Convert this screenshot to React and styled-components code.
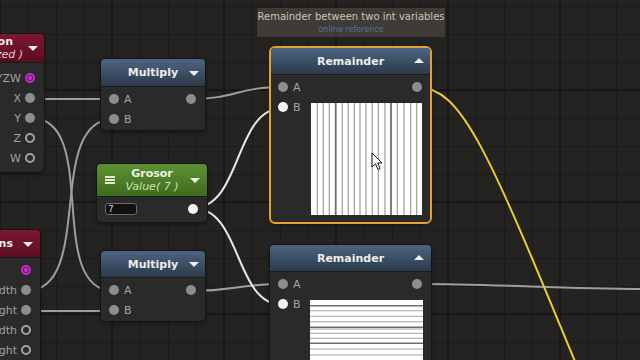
import React from 'react';
import styled, { createGlobalStyle, css } from 'styled-components';

const GlobalStyle = createGlobalStyle`
  html, body {
    margin: 0;
    padding: 0;
    background: #232220;
  }
  body {
    font-family: "DejaVu Sans", "Liberation Sans", sans-serif;
  }
`;

const Canvas = styled.div`
  position: relative;
  width: 640px;
  height: 360px;
  overflow: hidden;
  background-color: #242321;
  background-image:
    linear-gradient(to right, #181716 2px, transparent 2px),
    linear-gradient(to bottom, #181716 2px, transparent 2px),
    linear-gradient(to right, #1c1b1a 1px, transparent 1px),
    linear-gradient(to bottom, #1c1b1a 1px, transparent 1px);
  background-size: 112px 112px, 112px 112px, 28px 28px, 28px 28px;
  background-position: -1px 0, 0 89px, 0 0, 0 6px;
`;

const WireLayer = styled.svg`
  position: absolute;
  inset: 0;
  z-index: 0;
`;

const Node = styled.div`
  position: absolute;
  z-index: 1;
  left: ${(p) => p.$x}px;
  top: ${(p) => p.$y}px;
  width: ${(p) => p.$w}px;
  background: #2a2a2a;
  border-radius: 4px;
  box-shadow: 0 0 0 1px #141414, 0 2px 5px rgba(0, 0, 0, 0.45);
  ${(p) =>
    p.$selected &&
    css`
      outline: 2px solid #e2a32d;
      outline-offset: 0;
    `}
`;

const tones = {
  blue: 'linear-gradient(#4c6481, #2c3a4b)',
  green: 'linear-gradient(#5e9132, #3e6b1e)',
  maroon: 'linear-gradient(#7e1634, #5a0d23)',
};

const Header = styled.div`
  position: relative;
  height: ${(p) => p.$h}px;
  border-radius: 4px 4px 0 0;
  background: ${(p) => tones[p.$tone]};
  border-bottom: 1px solid #1a1a1a;
  box-sizing: border-box;
  display: flex;
  flex-direction: column;
  justify-content: center;
  align-items: ${(p) => (p.$end ? 'flex-end' : 'center')};
  padding: 0 22px;
  ${(p) => p.$end && 'padding: 0;'}
`;

const Title = styled.div`
  font-size: 11px;
  font-weight: bold;
  line-height: 13px;
  color: #ededea;
  white-space: nowrap;
  margin-right: ${(p) => p.$mr || 0}px;
`;

const Subtitle = styled.div`
  font-size: 11px;
  font-style: italic;
  line-height: 13px;
  white-space: nowrap;
  color: ${(p) => p.$color};
  margin-right: ${(p) => p.$mr || 0}px;
`;

const Caret = styled.span`
  position: absolute;
  right: ${(p) => p.$right}px;
  top: 50%;
  margin-top: -2px;
  width: 0;
  height: 0;
  border-left: 5px solid transparent;
  border-right: 5px solid transparent;
  ${(p) =>
    p.$up
      ? css`
          border-bottom: 5px solid #eeeeee;
          margin-top: -3px;
        `
      : css`
          border-top: 5px solid #eeeeee;
        `}
`;

const Burger = styled.span`
  position: absolute;
  left: 8px;
  top: 50%;
  margin-top: -4px;
  width: 10px;
  height: 8px;
  background: linear-gradient(
    #dfe9cf 0 2px,
    transparent 2px 3px,
    #dfe9cf 3px 5px,
    transparent 5px 6px,
    #dfe9cf 6px 8px
  );
`;

const Body = styled.div`
  padding: ${(p) => p.$pad || '2px 0 1px'};
`;

const Row = styled.div`
  display: flex;
  align-items: center;
  justify-content: ${(p) => p.$justify || 'flex-start'};
  height: 20px;
  gap: ${(p) => p.$gap ?? 5}px;
  padding: 0 ${(p) => p.$pr ?? 9}px 0 ${(p) => p.$pl ?? 8}px;
`;

const Group = styled.div`
  display: flex;
  align-items: center;
  gap: ${(p) => p.$gap ?? 5}px;
`;

const portKinds = {
  gray: css`
    background: #8d8d8d;
  `,
  white: css`
    background: #f2f2f2;
  `,
  hollow: css`
    border: 2px solid #a2a2a2;
    background: #2a2a2a;
  `,
  magenta: css`
    border: 2px solid #c62bd0;
    background: radial-gradient(circle, #c837cf 0 1.5px, #5c1862 2.5px);
  `,
};

const Port = styled.span`
  flex: none;
  width: 10px;
  height: 10px;
  border-radius: 50%;
  box-sizing: border-box;
  ${(p) => portKinds[p.$kind || 'gray']}
`;

const Label = styled.span`
  font-size: 11px;
  color: #a3a3a3;
  white-space: nowrap;
`;

const Split = styled.div`
  display: flex;
  align-items: flex-start;
  padding-bottom: 7px;
`;

const InColumn = styled.div`
  flex: 0 0 40px;
`;

const Preview = styled.div`
  flex: 1;
  margin: 6px 8px 0 0;
  height: 112px;
  background: #ffffff;
  overflow: hidden;
  svg {
    display: block;
  }
`;

const ValueField = styled.div`
  width: 32px;
  height: 12px;
  box-sizing: border-box;
  border: 1px solid #6b6b6b;
  border-radius: 3px;
  background: #111111;
  color: #cfcfcf;
  font-size: 9px;
  line-height: 10px;
  padding-left: 2px;
`;

const Tooltip = styled.div`
  position: absolute;
  z-index: 2;
  left: 257px;
  top: 8px;
  width: 188px;
  height: 29px;
  background: rgba(66, 62, 56, 0.92);
  display: flex;
  flex-direction: column;
  align-items: center;
  justify-content: center;
  gap: 2px;
`;

const TipText = styled.div`
  font-size: 10px;
  line-height: 12px;
  color: #c9c5b9;
  white-space: nowrap;
`;

const TipLink = styled.div`
  font-size: 8px;
  line-height: 10px;
  color: #56739c;
  white-space: nowrap;
`;

const Cursor = styled.svg`
  position: absolute;
  z-index: 3;
  left: 371px;
  top: 152px;
`;

const vLines = [6.3, 12.3, 18.3, 24.7, 31.3, 37.3, 43.3, 49, 55, 61.3, 67.3, 74, 80, 86.3, 93, 99.7, 105.7];
const hLines = [5.7, 10.7, 16.3, 21.7, 27.3, 29, 33.3, 38.3, 43.3, 49, 55, 60.5, 66, 71.5, 77, 82.5, 88, 93.5, 99, 104.5];

function StripesV() {
  return (
    <svg width="111" height="112">
      {vLines.map((x, i) => (
        <line
          key={i}
          x1={x}
          x2={x}
          y1="0"
          y2="112"
          stroke={i === 3 || i === 12 ? '#6e6e6e' : '#9c9c9c'}
          strokeWidth={i === 3 || i === 12 ? 1.8 : 1.2}
        />
      ))}
    </svg>
  );
}

function StripesH() {
  return (
    <svg width="113" height="112">
      {hLines.map((y, i) => (
        <line
          key={i}
          x1="0"
          x2="113"
          y1={y}
          y2={y}
          stroke={i % 4 === 0 ? '#6e6e6e' : '#a3a3a3'}
          strokeWidth={i % 4 === 0 ? 1.6 : 1.1}
        />
      ))}
    </svg>
  );
}

function Wires() {
  const gray = '#9e9e9e';
  const white = '#e6e6e6';
  return (
    <WireLayer width="640" height="360">
      <g fill="none" strokeWidth="2">
        <path d="M31 99 L114 99" stroke={gray} />
        <path d="M31 118 C101 118, 44 291, 114 291" stroke={gray} />
        <path d="M26 291 C96 291, 44 119, 114 119" stroke={gray} />
        <path d="M26 311 L114 311" stroke={gray} />
        <path d="M190 99 C236 99, 237 87, 283 87" stroke={gray} />
        <path d="M190 291 C236 291, 237 284, 283 284" stroke={gray} />
        <path d="M193 208 C242 208, 234 108, 283 108" stroke={white} />
        <path d="M193 208 C242 208, 234 305, 283 305" stroke={white} />
        <path d="M417 284 C500 284, 560 289, 640 289" stroke={gray} />
        <path d="M417 87 C468 87, 495 170, 620 470" stroke="#e6cf2e" />
      </g>
    </WireLayer>
  );
}

export default function App() {
  return (
    <>
      <GlobalStyle />
      <Canvas>
        <Wires />

        <Node $x={-66} $y={34} $w={110}>
          <Header $tone="maroon" $h={29} $end>
            <Title $mr={31}>Screen Position</Title>
            <Subtitle $mr={21} $color="#efc3cf">( Normalized )</Subtitle>
            <Caret $right={6} />
          </Header>
          <Body $pad="5px 0 4px">
            {[
              ['XYZW', 'magenta'],
              ['X', 'gray'],
              ['Y', 'gray'],
              ['Z', 'hollow'],
              ['W', 'hollow'],
            ].map(([name, kind]) => (
              <Row key={name} $justify="flex-end" $gap={4}>
                <Label>{name}</Label>
                <Port $kind={kind} />
              </Row>
            ))}
          </Body>
        </Node>

        <Node $x={-64} $y={230} $w={104}>
          <Header $tone="maroon" $h={28} $end>
            <Title $mr={27}>Screen Dimensions</Title>
            <Caret $right={7} />
          </Header>
          <Body $pad="2px 0 4px">
            {[
              ['', 'magenta'],
              ['Width', 'gray'],
              ['Height', 'gray'],
              ['1+1/Width', 'hollow'],
              ['1+1/Height', 'hollow'],
            ].map(([name, kind], i) => (
              <Row key={i} $justify="flex-end" $gap={4} $pr={9}>
                <Label>{name}</Label>
                <Port $kind={kind} />
              </Row>
            ))}
          </Body>
        </Node>

        <Node $x={101} $y={59} $w={104}>
          <Header $tone="blue" $h={28}>
            <Title>Multiply</Title>
            <Caret $right={6} />
          </Header>
          <Body>
            <Row $justify="space-between">
              <Group>
                <Port />
                <Label>A</Label>
              </Group>
              <Port />
            </Row>
            <Row>
              <Port />
              <Label>B</Label>
            </Row>
          </Body>
        </Node>

        <Node $x={97} $y={164} $w={110}>
          <Header $tone="green" $h={33}>
            <Burger />
            <Title>Grosor</Title>
            <Subtitle $color="#cfe4a6">Value( 7 )</Subtitle>
            <Caret $right={7} />
          </Header>
          <Body $pad="2px 0 3px">
            <Row $justify="space-between" $pl={8} $pr={9}>
              <ValueField>7</ValueField>
              <Port $kind="white" />
            </Row>
          </Body>
        </Node>

        <Node $x={101} $y={251} $w={104}>
          <Header $tone="blue" $h={27}>
            <Title>Multiply</Title>
            <Caret $right={6} />
          </Header>
          <Body>
            <Row $justify="space-between">
              <Group>
                <Port />
                <Label>A</Label>
              </Group>
              <Port />
            </Row>
            <Row>
              <Port />
              <Label>B</Label>
            </Row>
          </Body>
        </Node>

        <Node $x={271} $y={48} $w={159} $selected>
          <Header $tone="blue" $h={27}>
            <Title>Remainder</Title>
            <Caret $right={6} $up />
          </Header>
          <Body $pad="2px 0 0">
            <Row $justify="space-between" $pl={7} $pr={8}>
              <Group>
                <Port />
                <Label>A</Label>
              </Group>
              <Port />
            </Row>
            <Split>
              <InColumn>
                <Row $pl={7}>
                  <Port $kind="white" />
                  <Label>B</Label>
                </Row>
              </InColumn>
              <Preview>
                <StripesV />
              </Preview>
            </Split>
          </Body>
        </Node>

        <Node $x={270} $y={245} $w={161}>
          <Header $tone="blue" $h={27}>
            <Title>Remainder</Title>
            <Caret $right={7} $up />
          </Header>
          <Body $pad="2px 0 0">
            <Row $justify="space-between">
              <Group>
                <Port />
                <Label>A</Label>
              </Group>
              <Port />
            </Row>
            <Split>
              <InColumn>
                <Row>
                  <Port $kind="white" />
                  <Label>B</Label>
                </Row>
              </InColumn>
              <Preview>
                <StripesH />
              </Preview>
            </Split>
          </Body>
        </Node>

        <Tooltip>
          <TipText>Remainder between two int variables</TipText>
          <TipLink>online reference</TipLink>
        </Tooltip>

        <Cursor width="12" height="19" viewBox="0 0 12 19">
          <path
            d="M1 1 L1 15 L4.5 11.8 L7 17.5 L9.2 16.5 L6.8 11 L11 11 Z"
            fill="#ffffff"
            stroke="#111111"
            strokeWidth="1"
            strokeLinejoin="round"
          />
        </Cursor>
      </Canvas>
    </>
  );
}
